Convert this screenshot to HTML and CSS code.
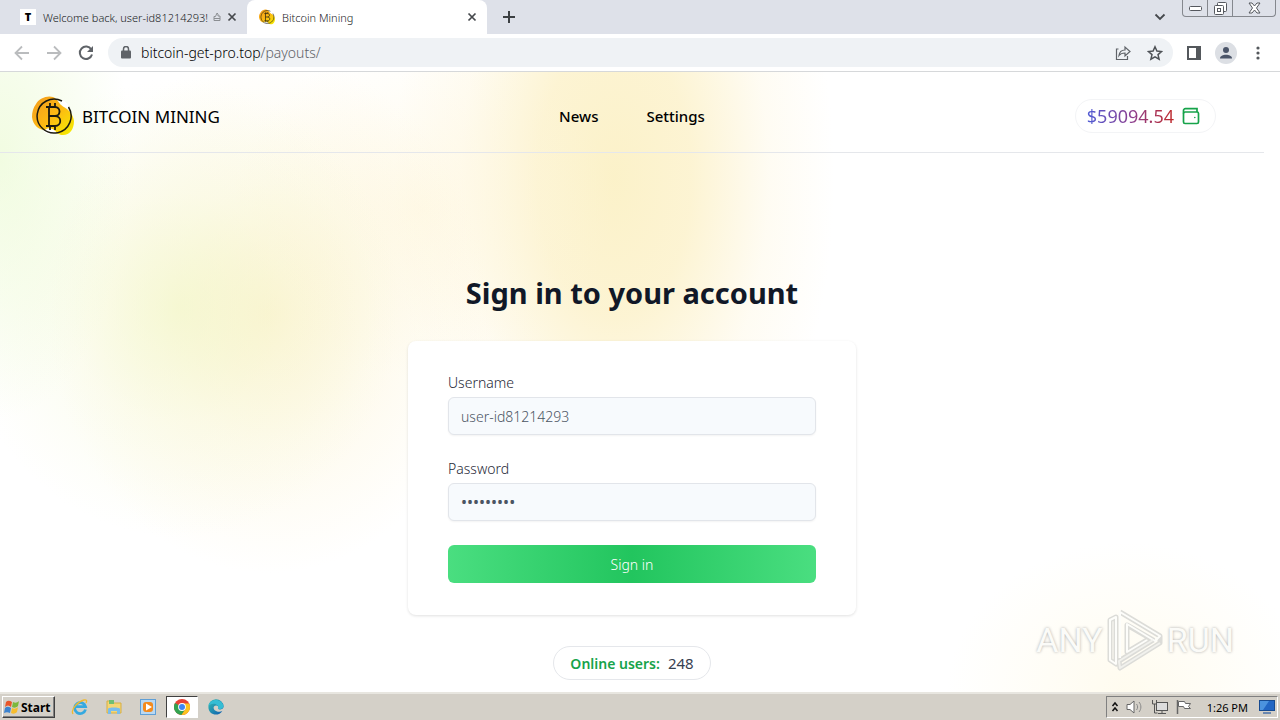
FILE: index.html
```html
<!DOCTYPE html>
<html lang="en">
<head>
    <meta charset="UTF-8">
    <meta name="viewport" content="width=device-width, initial-scale=1.0">
    <title>Bitcoin Mining</title>
    <link rel="stylesheet" href="styles.css">
</head>
<body>
    <svg width="0" height="0" class="defs" aria-hidden="true">
        <defs>
            <linearGradient id="coinFill" x1="0" y1="0" x2="1" y2="1">
                <stop offset="0" stop-color="#f39a1e"/>
                <stop offset="0.5" stop-color="#fdb913"/>
                <stop offset="1" stop-color="#f4f000"/>
            </linearGradient>
            <linearGradient id="edgeFill" x1="0" y1="0" x2="1" y2="1">
                <stop offset="0" stop-color="#35c1b1"/>
                <stop offset="1" stop-color="#0b57b0"/>
            </linearGradient>
            <symbol id="coin" viewBox="0 0 42 40">
                <path d="M4 8C8 1 19-2 24 3c3 3 4 6 8 8 5 3 9 7 10 14 0 8-4 14-11 14-6 0-8-6-15-5C8 35 1 30 0 21 0 16 1 12 4 8z" fill="url(#coinFill)"/>
                <path d="M12 36c1-4 6-5 10-2 3 2 3 3 0 4-3 1-7 0-10-2zM29 4c5 1 7 4 8 8l-5-1-3-4z" fill="#fff"/>
                <path d="M30 5A17 17 0 1 0 36.500 11" fill="none" stroke="#1c1a10" stroke-width="1.500"/>
                <path d="M14 11h9c6 0 6 9 0 9h-6m6 0c7 0 7 10 0 10h-9M17 11v19M18 7v4M23 7v4M18 30v4M23 30v4" fill="none" stroke="#1c1a10" stroke-width="1.800"/>
            </symbol>
        </defs>
    </svg>

    <!-- browser tabs -->
    <div class="tab-strip">
        <div class="tab">
            <span class="tab-icon">T</span>
            <span class="tab-title">Welcome back, user-id81214293!</span>
            <svg class="tab-hand" width="8" height="10" viewBox="0 0 8 10"><path d="M1 4.500h1.500L4 1l1 1v2h2v4.500H1zM1 6.500h6" fill="none" stroke="#8b8e92"/></svg>
            <button class="icon-btn tab-close" aria-label="Close tab"><svg width="10" height="10" viewBox="0 0 10 10"><path d="M1.500 1.500l7 7M8.500 1.500l-7 7" stroke="#45484c" stroke-width="1.700"/></svg></button>
        </div>
        <div class="tab active">
            <svg width="16" height="16"><use href="#coin"/></svg>
            <span class="tab-title">Bitcoin Mining</span>
            <button class="icon-btn tab-close" aria-label="Close tab"><svg width="10" height="10" viewBox="0 0 10 10"><path d="M1.500 1.500l7 7M8.500 1.500l-7 7" stroke="#45484c" stroke-width="1.700"/></svg></button>
        </div>
        <button class="icon-btn new-tab" aria-label="New tab"><svg width="12" height="12" viewBox="0 0 12 12"><path d="M6 0v12M0 6h12" stroke="#3c4043" stroke-width="2"/></svg></button>
        <button class="icon-btn tab-search" aria-label="Search tabs"><svg width="12" height="8" viewBox="0 0 12 8"><path d="M1.500 1.500L6 6l4.500-4.500" fill="none" stroke="#45484c" stroke-width="1.800"/></svg></button>
        <div class="window-btns">
            <button aria-label="Minimize"><svg width="13" height="5" viewBox="0 0 13 5"><rect x=".5" y=".5" width="12" height="4" rx="1" fill="#fff" stroke="#55585e"/></svg></button>
            <button aria-label="Restore"><svg width="13" height="13" viewBox="0 0 13 13"><g fill="#fff" stroke="#55585e"><rect x="3.500" y=".5" width="9" height="9" rx="1"/><rect x=".5" y="3.500" width="9" height="9" rx="1"/><rect x="3.500" y="6.500" width="3" height="3"/></g></svg></button>
            <button class="wide" aria-label="Close"><svg width="13" height="12" viewBox="0 0 13 12"><path d="M1 1h3l2.500 3L9 1h3L8.500 6l3.500 5H9L6.500 8 4 11H1l3.500-5z" fill="#fff" stroke="#55585e"/></svg></button>
        </div>
    </div>

    <!-- address bar -->
    <div class="toolbar">
        <div class="nav-btns">
            <button class="icon-btn" aria-label="Back"><svg width="16" height="16" viewBox="0 0 16 16"><path d="M15 8H2M8 1.500L1.500 8 8 14.500" fill="none" stroke="#babcbe" stroke-width="1.800"/></svg></button>
            <button class="icon-btn" aria-label="Forward"><svg width="16" height="16" viewBox="0 0 16 16"><path d="M1 8h13M8 1.500L14.500 8 8 14.500" fill="none" stroke="#babcbe" stroke-width="1.800"/></svg></button>
            <button class="icon-btn" aria-label="Reload"><svg width="16" height="16" viewBox="0 0 16 16"><path d="M13.300 4.500A6.200 6.200 0 1 0 14 9.500" fill="none" stroke="#5f6368" stroke-width="2"/><path d="M15 1v6H9z" fill="#5f6368"/></svg></button>
        </div>
        <div class="address">
            <svg width="10" height="13" viewBox="0 0 10 13"><rect y="4.500" width="10" height="8" rx="1" fill="#5f6368"/><path d="M2.500 5V3a2.500 2.500 0 0 1 5 0v2" fill="none" stroke="#5f6368" stroke-width="1.500"/></svg>
            <span class="url">bitcoin-get-pro.top<span>/payouts/</span></span>
            <button class="icon-btn" aria-label="Share"><svg width="16" height="16" viewBox="0 0 16 16"><path d="M3.500 4H1.500v10.500h11V11M4 10.500c.5-4 3-5.500 6-5.500V2L15 6.500 10 11V8c-2.500 0-4.500.5-6 2.500z" fill="none" stroke="#5f6368" stroke-width="1.200"/></svg></button>
            <button class="icon-btn" aria-label="Bookmark"><svg width="16" height="16" viewBox="0 0 16 16"><path d="M8 1.800l1.900 4.300 4.600.4-3.500 3.100 1.100 4.600L8 11.800l-4.100 2.400L5 9.600 1.500 6.500l4.600-.4z" fill="none" stroke="#4e5256" stroke-width="1.500"/></svg></button>
        </div>
        <button class="icon-btn" aria-label="Side panel"><svg width="14" height="14" viewBox="0 0 14 14"><rect x="1" y="1" width="12" height="12" fill="none" stroke="#54585c" stroke-width="2"/><path d="M9 1h4v12H9z" fill="#54585c"/></svg></button>
        <button class="icon-btn avatar" aria-label="Profile"><svg width="22" height="22" viewBox="0 0 22 22"><circle cx="11" cy="8" r="3" fill="#4a5468"/><path d="M5 16.500c0-5 12-5 12 0z" fill="#4a5468"/></svg></button>
        <button class="icon-btn" aria-label="Menu"><svg width="14" height="14" viewBox="0 0 14 14" fill="#54585c"><circle cx="7" cy="2" r="1.600"/><circle cx="7" cy="7" r="1.600"/><circle cx="7" cy="12" r="1.600"/></svg></button>
    </div>

    <!-- site -->
    <div class="page">
        <header class="site-header">
            <a href="#" class="brand">
                <svg width="42" height="40"><use href="#coin"/></svg>
                <span>BITCOIN MINING</span>
            </a>
            <nav class="site-nav">
                <a href="#">News</a>
                <a href="#">Settings</a>
            </nav>
            <a href="#" class="balance">
                <span>$59094.54</span>
                <svg width="18" height="18" viewBox="0 0 18 18" fill="none" stroke="#16a34a" stroke-width="1.700"><rect x="1.500" y="5" width="15" height="11.500" rx="1.500"/><path d="M1.500 6.500v-3A1.800 1.800 0 0 1 3.300 1.700H15V5"/><circle cx="12.800" cy="10.500" r=".8" fill="#16a34a" stroke="none"/></svg>
            </a>
        </header>

        <main>
            <h1>Sign in to your account</h1>
            <form class="card">
                <div class="form-group">
                    <label for="username">Username</label>
                    <input type="text" id="username" value="user-id81214293">
                </div>
                <div class="form-group">
                    <label for="password">Password</label>
                    <input type="password" id="password" value="123456789">
                </div>
                <button type="submit" class="login-btn">Sign in</button>
            </form>
            <div class="online"><strong>Online users:</strong><span>248</span></div>
        </main>

        <div class="watermark">
            <span>ANY</span>
            <svg width="60" height="64" viewBox="0 0 60 64" fill="none" stroke-linejoin="round">
                <g stroke="#dcdcd8" stroke-width="5"><path d="M11 9l-6 3v40l6 4zM15 4l40 24v7L15 60l-1-7 34-21L22 17v27l20-12"/></g>
                <g stroke="#fdfdfa" stroke-width="2"><path d="M11 9l-6 3v40l6 4zM15 50V4l40 24-5 5-28-17v28l20-12"/></g>
                <path d="M55 35L15 60l-1-7 34-21" stroke="#f1f1ed" stroke-width="2"/>
            </svg>
            <span>RUN</span>
        </div>
    </div>

    <!-- windows taskbar -->
    <div class="taskbar">
        <button class="start">
            <svg width="16" height="16" viewBox="0 0 16 16"><path d="M2 3c2-2 4-1 6 0L7 8C5 6 3 6 1 8z" fill="#e8562a"/><path d="M9 3c2 1 4 1 6-1l-1 5c-2 2-4 2-6 1z" fill="#7cb83d"/><path d="M1 9c2-2 4-1 6 0l-1 5c-2-1-4-1-6 0z" fill="#3d83cf"/><path d="M8 9c2 1 4 1 6-1l-1 5c-2 2-4 2-6 1z" fill="#f7bd2d"/></svg>
            Start
        </button>
        <div class="quick-launch">
            <button aria-label="Internet Explorer"><svg width="18" height="18" viewBox="0 0 18 18"><path d="M14.500 11.500A5.500 5.500 0 1 1 14.500 8.700H5" fill="none" stroke="#35a9e0" stroke-width="2.800"/><path d="M2 16C-1 11 8 3 13 2c3-.5 3 1 2 3" fill="none" stroke="#efb92e" stroke-width="1.300"/></svg></button>
            <button aria-label="Explorer"><svg width="18" height="18" viewBox="0 0 18 18"><path d="M2 3h5l1 2h8v10H2z" fill="#f4d675" stroke="#d6ae45"/><path d="M4 2h5v4H4z" fill="#6fbf73"/><path d="M3 16v-5c0-2 12-2 12 0v5h-3v-3H6v3z" fill="#79bdec"/></svg></button>
            <button aria-label="Media Player"><svg width="18" height="18" viewBox="0 0 18 18"><rect x="1.500" y="1.500" width="15" height="15" fill="#b9d8f2" stroke="#5f9fd6"/><rect x="4" y="4" width="10" height="10" rx="3" fill="#f38a1d"/><path d="M7 5.500v7L13 9z" fill="#fff"/></svg></button>
            <button class="pressed" aria-label="Chrome"><svg width="16" height="16" viewBox="0 0 16 16"><circle cx="8" cy="8" r="8" fill="#e94235"/><path d="M8 8L1 4A8 8 0 0 0 7.500 16L11.500 10z" fill="#32a350"/><path d="M8 4.500h7.200A8 8 0 0 1 7.500 16l4-6z" fill="#fcc31e"/><circle cx="8" cy="8" r="3.900" fill="#fff"/><circle cx="8" cy="8" r="3" fill="#4086f4"/></svg></button>
            <button aria-label="Edge"><svg width="16" height="16" viewBox="0 0 16 16"><path d="M.4 8A7.600 7.600 0 0 1 15.600 7.500c0 3-4 3.500-5.500 2.500 1-1 .5-3.500-2-3.500-3.500 0-3.500 5 1 6 2 .5 4 0 5.300-.8C11 18 .4 16.500.4 8z" fill="url(#edgeFill)"/><path d="M.5 7C2-1 14-1 15.500 7c.3 2.500-3.500 4-5.400 2.700C12 6 5 2 .5 7z" fill="#35bdd4"/></svg></button>
        </div>
        <div class="tray">
            <svg width="8" height="12" viewBox="0 0 8 12"><path d="M1.500 5L4 2l2.500 3M1.500 10L4 7l2.500 3" fill="none" stroke="#111" stroke-width="1.500"/></svg>
            <svg width="18" height="16" viewBox="0 0 18 16"><path d="M1 5.500h3L8 2v12l-4-3.500H1z" fill="#fff" stroke="#666"/><path d="M10.500 5c1.500 2 1.500 4 0 6M13 3c2.500 3 2.500 7 0 10" fill="none" stroke="#888"/></svg>
            <svg width="18" height="16" viewBox="0 0 18 16"><rect x="5.500" y="3.500" width="11" height="8" fill="#ddd" stroke="#555"/><path d="M7 14.500h8M11 12v2M1.500 1v4h4V1M3.500 5v9h3" fill="none" stroke="#555"/></svg>
            <svg width="16" height="16" viewBox="0 0 16 16"><path d="M1.500 1v14" stroke="#666" stroke-width="1.500"/><path d="M2.500 2.500h6l1 2h5l-2 3 2 2h-6l-1-2h-5z" fill="#fff" stroke="#666"/></svg>
            <time>1:26 PM</time>
            <svg width="16" height="14" viewBox="0 0 16 14"><rect x=".5" y=".5" width="15" height="10" fill="#2266c4" stroke="#174b91"/><path d="M1 1h9L4 10H1z" fill="#4b93df"/><path d="M4 13h8" stroke="#6b88b0" stroke-width="2"/></svg>
        </div>
    </div>
</body>
</html>
```
FILE: styles.css
```css
* {
    box-sizing: border-box;
}
body {
    margin: 0;
    min-height: 100vh;
    display: flex;
    flex-direction: column;
    font-family: "Noto Sans", "Open Sans", sans-serif;
    font-size: 14px;
    color: #111827;
    background: #fff;
}
a {
    color: inherit;
    text-decoration: none;
}
button,
input {
    font: inherit;
}
svg {
    display: block;
    flex: none;
}
.defs {
    position: absolute;
}
.icon-btn {
    display: flex;
    align-items: center;
    justify-content: center;
    padding: 0;
    border: none;
    background: none;
}

/* tabs */
.tab-strip {
    display: flex;
    height: 34px;
    background: #dee1e9;
    font-size: 11px;
    color: #202124;
}
.tab {
    display: flex;
    align-items: center;
    width: 247px;
    padding: 0 10px 0 20px;
    font-weight: 300;
    white-space: nowrap;
}
.tab.active {
    width: 240px;
    padding-left: 12px;
    background: #fff;
    border-radius: 8px 8px 0 0;
}
.tab-icon {
    width: 16px;
    height: 16px;
    background: #fff;
    color: #000;
    font-weight: 900;
    line-height: 16px;
    text-align: center;
}
.tab-title {
    margin-left: 7px;
}
.tab-hand {
    margin-left: 5px;
}
.tab-close {
    margin-left: auto;
}
.new-tab {
    margin-left: 16px;
}
.tab-search {
    margin-left: auto;
    margin-right: 16px;
}
.window-btns {
    display: flex;
    height: 17px;
    margin-right: 4px;
    border: 1px solid #85888e;
    border-top: none;
    border-radius: 0 0 4px 4px;
}
.window-btns button {
    display: flex;
    align-items: center;
    justify-content: center;
    width: 25px;
    padding: 0;
    border: none;
    border-right: 1px solid #85888e;
    background: none;
}
.window-btns .wide {
    width: 42px;
    border-right: none;
}

/* address bar */
.toolbar {
    display: flex;
    align-items: center;
    gap: 14px;
    height: 38px;
    padding: 0 15px 0 14px;
    border-bottom: 1px solid #d6d8da;
    background: #fff;
}
.nav-btns {
    display: flex;
    gap: 16px;
}
.address {
    display: flex;
    flex: 1;
    align-items: center;
    gap: 16px;
    height: 29px;
    padding: 0 10px 0 13px;
    border-radius: 15px;
    background: #eff2f5;
}
.url {
    flex: 1;
    margin-left: -6px;
    color: #000;
    font-weight: 300;
}
.url span {
    color: #5f6368;
}
.avatar {
    border-radius: 50%;
    background: #dcdfe4;
}

/* site */
.page {
    position: relative;
    flex: 1;
    padding-right: 16px;
    background:
        radial-gradient(ellipse 130px 260px at 0% 14%, rgba(232, 250, 205, 0.6), transparent),
        radial-gradient(ellipse 220px 230px at 14% 38%, rgba(240, 246, 195, 0.6), rgba(244, 248, 210, 0.3) 50%, transparent),
        radial-gradient(ellipse 220px 260px at 21% 39%, rgba(252, 240, 200, 0.8), rgba(253, 244, 212, 0.4) 50%, transparent),
        radial-gradient(ellipse 190px 170px at 33% 22%, rgba(254, 246, 220, 0.6), transparent),
        radial-gradient(ellipse 220px 400px at 48% 17%, rgba(251, 240, 195, 0.9), rgba(252, 241, 200, 0.8) 35%, rgba(254, 247, 224, 0.4) 70%, transparent),
        radial-gradient(ellipse 180px 150px at 88% 100%, rgba(255, 249, 228, 0.6), transparent),
        #fff;
}
.site-header {
    display: grid;
    grid-template-columns: 1fr auto 1fr;
    align-items: center;
    height: 81px;
    padding: 8px 32px 0;
    border-bottom: 1px solid #e5e7eb;
    color: #000;
}
.brand {
    display: flex;
    align-items: center;
    gap: 8px;
    font-size: 17px;
}
.site-nav {
    display: flex;
    gap: 48px;
    font-size: 15px;
    font-weight: 500;
}
.balance {
    display: flex;
    align-items: center;
    justify-self: end;
    gap: 8px;
    height: 34px;
    margin-right: 16px;
    padding: 0 15px 0 11px;
    border: 1px solid #f3f4f6;
    border-radius: 17px;
    background: #fff;
    font-size: 18px;
}
.balance span {
    background: linear-gradient(to right, #4f5bd5, #8a3f92, #c02a2a);
    -webkit-background-clip: text;
    background-clip: text;
    color: transparent;
}
main {
    display: flex;
    flex-direction: column;
    align-items: center;
    padding: 122px 16px 12px;
}
h1 {
    margin: 0 0 30px;
    font-size: 29px;
    line-height: 36px;
}
.card {
    display: flex;
    flex-direction: column;
    gap: 24px;
    width: 100%;
    max-width: 448px;
    padding: 32px 40px;
    border-radius: 8px;
    background: #fff;
    box-shadow: 0 1px 3px rgba(0, 0, 0, 0.12);
    font-weight: 300;
}
.form-group label {
    display: block;
    margin-bottom: 4px;
    color: #1f2937;
    line-height: 20px;
}
.form-group input {
    display: block;
    width: 100%;
    height: 38px;
    padding: 8px 12px;
    border: 1px solid #e2e5ea;
    border-radius: 6px;
    background: #f7fafd;
    box-shadow: 0 1px 2px rgba(0, 0, 0, 0.05);
    color: #4b5563;
}
.form-group input[type="password"] {
    font-size: 16px;
    font-weight: 400;
}
.login-btn {
    height: 38px;
    border: none;
    border-radius: 6px;
    background: linear-gradient(to right, #4ade80, #22c55e, #4ade80);
    color: #fff;
    cursor: pointer;
}
.online {
    display: flex;
    align-items: center;
    gap: 8px;
    height: 34px;
    margin-top: 31px;
    padding: 0 16px;
    border: 1px solid #e5e7eb;
    border-radius: 17px;
    background: #fff;
    color: #374151;
    font-size: 15px;
}
.online strong {
    color: #16a34a;
    font-size: 14px;
    font-weight: 600;
}
.watermark {
    position: absolute;
    right: 46px;
    bottom: 20px;
    display: flex;
    align-items: center;
    gap: 2px;
    color: #fbfbf8;
    font-family: Roboto, sans-serif;
    font-size: 34px;
    line-height: 64px;
    text-shadow: 0 0 3px #aaa;
}

/* taskbar */
.taskbar {
    display: flex;
    align-items: center;
    height: 28px;
    padding: 0 2px;
    border-top: 2px solid #e8e6e0;
    background: #d4d0c8;
    color: #000;
    font-size: 11px;
}
.start {
    display: flex;
    align-items: center;
    gap: 1px;
    height: 22px;
    padding: 0 3px 0 1px;
    border: 1px solid;
    border-color: #fff #404040 #404040 #fff;
    background: #d4d0c8;
    box-shadow: inset -1px -1px #808080;
    font-size: 12px;
    font-weight: 700;
}
.quick-launch {
    display: flex;
    gap: 2px;
    margin-left: 9px;
}
.quick-launch button {
    display: flex;
    align-items: center;
    justify-content: center;
    width: 32px;
    height: 22px;
    padding: 0;
    border: none;
    background: none;
}
.quick-launch .pressed {
    border: 1px solid;
    border-color: #404040 #fff #fff #404040;
    background: #fff;
}
.tray {
    display: flex;
    align-items: center;
    gap: 7px;
    height: 22px;
    margin-left: auto;
    padding: 0 2px 0 4px;
    border: 1px solid;
    border-color: #808080 #fff #fff #808080;
}
.tray time {
    margin: 0 4px 0 8px;
}
```
